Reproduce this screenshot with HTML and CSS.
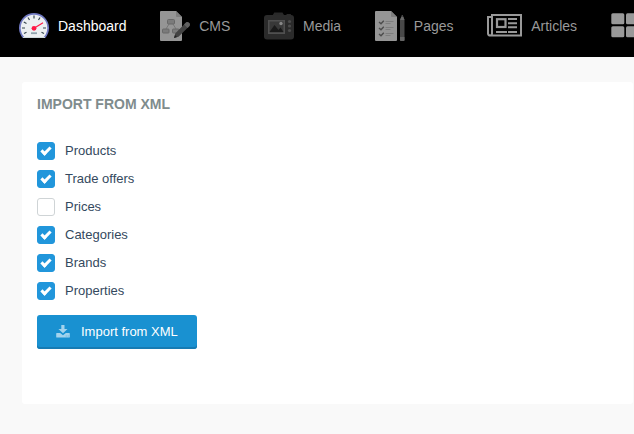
FILE: index.html
```html
<!DOCTYPE html>
<html lang="en">
<head>
<meta charset="utf-8">
<title>Import from XML</title>
<link rel="stylesheet" href="styles.css">
</head>
<body>
<nav class="nav">
  <a class="nav-item active">
    <svg width="30" height="30" viewBox="0 0 30 30">
      <path d="M3.800 27A15 15 0 1 1 26.200 27z" fill="#7079c2"/>
      <path d="M6.200 27A13.300 13.300 0 1 1 23.800 27z" fill="#eceff1"/>
      <path d="M15 4.500v3M9 6.500l1.500 2.500M21 6.500L19.500 9M4.800 11l2.700 1.500M3 17h3M24 17h3M5 22.500l2.500-1.300M25 22.500l-2.500-1.300" stroke="#37474f" stroke-width="1.200"/>
      <path d="M15 17.300l9-5.500" stroke="#ff1744" stroke-width="1.100"/>
      <circle cx="15" cy="17.300" r="2.400" fill="#ff1744"/>
      <path d="M12 22.200h6" stroke="#90a4ae" stroke-width="1.800"/>
      <path d="M4 26.500h22" stroke="#cfd8dc"/>
    </svg><span>Dashboard</span>
  </a>
  <a class="nav-item">
    <svg width="30" height="30" viewBox="0 0 30 30">
      <path d="M1 0h15l6 6v23q0 1-1 1H1q-1 0-1-1V1q0-1 1-1z" fill="#959595"/>
      <path d="M16 0v5q0 1 1 1h5z" fill="#7d7d7d"/>
      <path d="M9 13l-3 5M13 13l3 5" stroke="#777" fill="none"/>
      <rect x="7.500" y="8.500" width="7" height="4.500" rx="1" fill="#7b7b7b" stroke="#686868"/>
      <rect x="2.500" y="18" width="6.500" height="4" rx=".7" fill="#7b7b7b" stroke="#686868"/>
      <rect x="12.500" y="18" width="6.500" height="4" rx=".7" fill="#7b7b7b" stroke="#686868"/>
      <path d="M14 27l1.200-4.500L25.500 12q1.500-2 3.500-.2 1.800 1.800.2 3.500L18.500 25.800z" fill="#434343"/>
      <path d="M24 13.500l3.600 3.600 1.700-1.800q1.500-2-.3-3.500-1.800-1.500-3.500.2z" fill="#606060"/>
      <path d="M14 27l1-3 2 2z" fill="#222"/>
    </svg><span>CMS</span>
  </a>
  <a class="nav-item">
    <svg width="30" height="30" viewBox="0 0 30 30">
      <path d="M8.500 4.500l1.800-3h8.200l1.800 3zM22 5l.7-2h4l.8 2z" fill="#292929"/>
      <rect y="4" width="30" height="24.500" rx="3" fill="#2b2b2b"/>
      <rect x="4" y="9" width="17" height="14" fill="#505050"/>
      <rect x="5.500" y="10.500" width="14" height="11" fill="#383838"/>
      <path d="M5.500 21l5-7 4 5 2-2.500 3 4.500z" fill="#191919"/>
      <circle cx="17" cy="12.500" r="1.700" fill="#888"/>
      <g fill="#4c4c4c"><circle cx="25.500" cy="10.500" r="1.600"/><circle cx="25.500" cy="15" r="1.600"/><circle cx="25.500" cy="19.500" r="1.600"/></g>
    </svg><span>Media</span>
  </a>
  <a class="nav-item">
    <svg width="30" height="30" viewBox="0 0 30 30">
      <path d="M1 0h15l6 6v23q0 1-1 1H1q-1 0-1-1V1q0-1 1-1z" fill="#959595"/>
      <path d="M16 0v5q0 1 1 1h5z" fill="#7d7d7d"/>
      <path d="M4 11l2 1.800 2.800-3M4 17l2 1.800 2.800-3M4 23l2 1.800 2.800-3" fill="none" stroke="#4c4c4c" stroke-width="1.400"/>
      <path d="M10.500 10.500h8M10.500 12.500h5M10.500 16.500h8M10.500 18.500h5M10.500 22.500h8M10.500 24.500h5" stroke="#7b7b7b" stroke-width=".9"/>
      <path d="M25 9l1.800-5h1L29.500 9v20q0 1-1 1h-2.500q-1 0-1-1z" fill="#494949"/>
      <path d="M25 9l1.300-3h2L29.500 9z" fill="#686868"/>
      <path d="M25 26h4.500v3q0 1-1 1H26q-1 0-1-1z" fill="#656565"/>
    </svg><span>Pages</span>
  </a>
  <a class="nav-item">
    <svg width="35" height="30" viewBox="0 0 35 30">
      <path d="M5 4H34V24.600H3.500Q1 24.600 1 22.500V6h4v16.500Q5 24.600 3.200 24.600M5 3v4" fill="none" stroke="#999" stroke-width="2"/>
      <rect x="10" y="8.200" width="8.500" height="7.800" fill="none" stroke="#999" stroke-width="2.200"/>
      <path d="M21 8h9M21 12.200h9M21 16.200h9M9 21h11M21 21h9" stroke="#999" stroke-width="2"/>
    </svg><span>Articles</span>
  </a>
  <a class="nav-item">
    <svg width="28" height="30" viewBox="0 0 28 30">
      <g fill="#999"><rect x=".3" y="2.300" width="13" height="11" rx="1.500"/><rect x="15" y="2.300" width="13" height="11" rx="1.500"/><rect x=".3" y="15.200" width="13" height="11" rx="1.500"/><rect x="15" y="15.200" width="13" height="11" rx="1.500"/></g>
    </svg>
  </a>
</nav>
<main class="panel">
  <h1 class="title">Import from XML</h1>
  <div class="options">
    <label class="option"><input class="check" type="checkbox" checked>Products</label>
    <label class="option"><input class="check" type="checkbox" checked>Trade offers</label>
    <label class="option"><input class="check" type="checkbox">Prices</label>
    <label class="option"><input class="check" type="checkbox" checked>Categories</label>
    <label class="option"><input class="check" type="checkbox" checked>Brands</label>
    <label class="option"><input class="check" type="checkbox" checked>Properties</label>
  </div>
  <button class="submit" type="button">
    <svg width="14" height="14" viewBox="0 0 14 14" fill="#a3d3ed"><path d="M5.300 0h3.200v4h3L7 8.300 2.400 4h2.900z"/><path d="M.8 8h3.400L7 10.300 9.800 8h3.400q.6 0 .6.600v3.400q0 .6-.6.600H.8q-.6 0-.6-.6V8.600q0-.6.600-.6z"/><path d="M9.700 11h1M11.700 11h1" stroke="#5eb2df"/></svg>Import from XML
  </button>
</main>
</body>
</html>
```

FILE: styles.css
```css
*, *::before { box-sizing: border-box; }

body {
  margin: 0;
  background: #f9f9f9;
  color: #34495e;
  font-family: "Liberation Sans", Arial, sans-serif;
  font-size: 13px;
  overflow: hidden;
}

.nav {
  display: flex;
  gap: 33.700px;
  height: 57px;
  padding: 11px 0 0 19px;
  background: #000;
  overflow: hidden;
}

.nav-item {
  display: flex;
  flex: none;
  gap: 9px;
  height: 30px;
  color: #999;
  font-size: 14px;
  line-height: 30px;
}

.nav-item.active { color: #fff; }
.nav-item svg { display: block; flex: none; }

.panel {
  height: 322px;
  margin: 25px 1px 0 22px;
  padding: 14px 15px;
  background: #fff;
  border-radius: 3px;
}

.title {
  margin: 0 0 30px;
  color: #7f8c8d;
  font-size: 14px;
  line-height: 16px;
  text-transform: uppercase;
}

.options {
  display: grid;
  row-gap: 10px;
  margin-bottom: 15px;
}

.option {
  display: flex;
  align-items: center;
  gap: 10px;
  height: 18px;
  line-height: 16px;
}

.check {
  appearance: none;
  flex: none;
  width: 18px;
  height: 18px;
  margin: 0;
  background: #fff;
  border: 1px solid #cfd4d6;
  border-radius: 3px;
}

.check:checked {
  display: grid;
  place-items: center;
  background: #2196db;
  border-color: #2196db;
}

.check:checked::before {
  content: "";
  width: 10px;
  height: 6px;
  margin-top: -2px;
  border: solid #fff;
  border-width: 0 0 3px 3px;
  transform: rotate(-45deg);
}

.submit {
  display: flex;
  align-items: center;
  gap: 11px;
  width: 160px;
  height: 34px;
  padding: 0 0 0 19px;
  background: #1991d1;
  border: 0;
  box-shadow: inset 0 -2px #167bb3;
  border-radius: 3px;
  color: #fff;
  font: 13px/16px "Liberation Sans", Arial, sans-serif;
}
```
